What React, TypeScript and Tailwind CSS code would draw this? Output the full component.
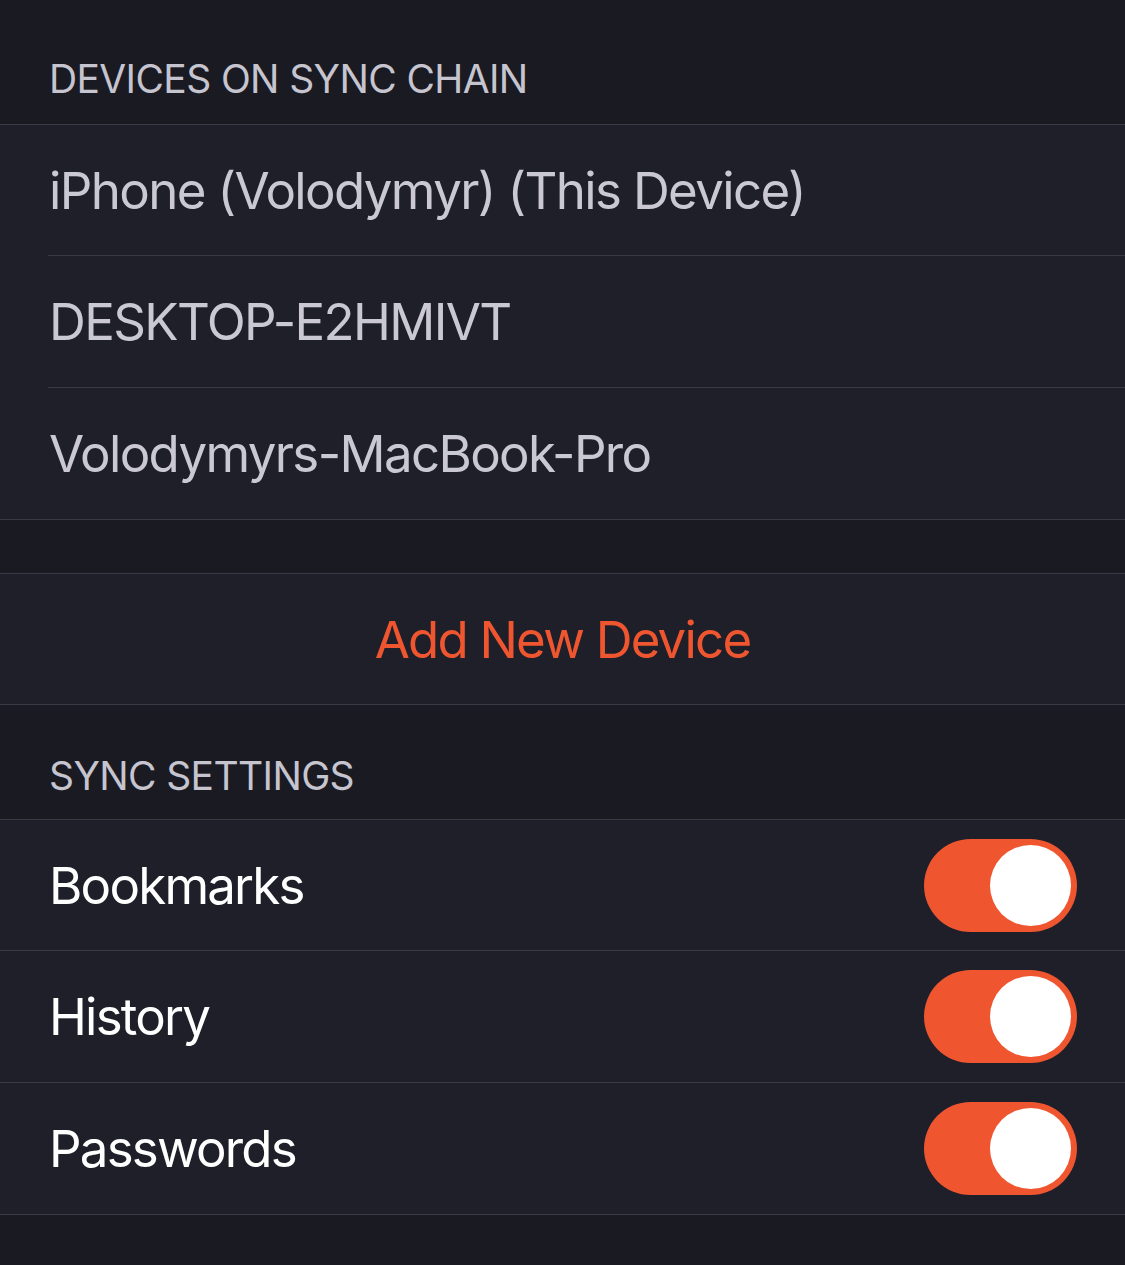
import React from 'react';

const devices = ['iPhone (Volodymyr) (This Device)', 'DESKTOP-E2HMIVT', 'Volodymyrs-MacBook-Pro'];
const settings = ['Bookmarks', 'History', 'Passwords'];

function Toggle() {
  return (
    <div className="flex h-[93px] w-[153px] items-center justify-end rounded-full bg-[#ef5630] pr-[6px]">
      <div className="h-[81px] w-[81px] rounded-full bg-white" />
    </div>
  );
}

export default function App() {
  return (
    <div className="min-h-[1265px] w-[1125px] bg-[#1a1a23] font-['Inter','Liberation_Sans',sans-serif] antialiased">
      {/* Devices on sync chain */}
      <div className="flex h-[124px] items-end pb-[26px] pl-[49px]">
        <span className="text-[39px] leading-none tracking-[-0.016em] text-[#c6c5cf]">DEVICES ON SYNC CHAIN</span>
      </div>
      <div className="border-t border-[#3b3a44] bg-[#1f1f2a]">
        {devices.map((d, i) => {
          const last = i === devices.length - 1;
          return (
            <div key={d} className={last ? '' : 'pl-[48px]'}>
              <div
                className={`flex items-center border-b border-[#3b3a44] ${i === 0 ? 'h-[131px]' : 'h-[132px]'} ${last ? 'pl-[48px]' : ''}`}
              >
                <span className="pl-[1px] text-[51px] leading-none tracking-[-0.032em] text-[#c9c8d3]">{d}</span>
              </div>
            </div>
          );
        })}
      </div>

      <div className="h-[53px]" />

      {/* Add device */}
      <div className="flex h-[132px] items-center justify-center border-y border-[#3b3a44] bg-[#1f1f2a]">
        <span className="text-[51px] leading-none tracking-[-0.035em] text-[#ef5630]">Add New Device</span>
      </div>

      {/* Sync settings */}
      <div className="flex h-[114px] items-end pb-[24px] pl-[49px]">
        <span className="text-[39px] leading-none tracking-[-0.016em] text-[#c6c5cf]">SYNC SETTINGS</span>
      </div>
      <div className="border-t border-[#3b3a44] bg-[#1f1f2a]">
        {settings.map((s, i) => (
          <div
            key={s}
            className={`flex items-center justify-between border-b border-[#3b3a44] pl-[49px] pr-[48px] ${i === 0 ? 'h-[131px]' : 'h-[132px]'}`}
          >
            <span className="text-[51px] leading-none tracking-[-0.035em] text-white">{s}</span>
            <Toggle />
          </div>
        ))}
      </div>
    </div>
  );
}
